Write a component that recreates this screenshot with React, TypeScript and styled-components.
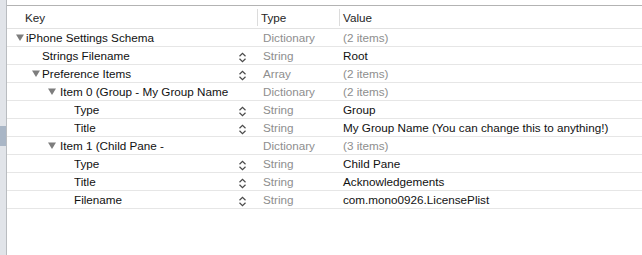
import React from "react";
import styled, { createGlobalStyle } from "styled-components";

interface PlistRow {
  level: number;
  name: string;
  type: string;
  value: string;
  open?: boolean;
  stepper?: boolean;
  muted?: boolean;
}

const rows: PlistRow[] = [
  { level: 0, name: "iPhone Settings Schema", type: "Dictionary", value: "(2 items)", open: true, muted: true },
  { level: 1, name: "Strings Filename", type: "String", value: "Root", stepper: true },
  { level: 1, name: "Preference Items", type: "Array", value: "(2 items)", open: true, stepper: true, muted: true },
  { level: 2, name: "Item 0 (Group - My Group Name", type: "Dictionary", value: "(2 items)", open: true, muted: true },
  { level: 3, name: "Type", type: "String", value: "Group", stepper: true },
  { level: 3, name: "Title", type: "String", value: "My Group Name (You can change this to anything!)", stepper: true },
  { level: 2, name: "Item 1 (Child Pane -", type: "Dictionary", value: "(3 items)", open: true, muted: true },
  { level: 3, name: "Type", type: "String", value: "Child Pane", stepper: true },
  { level: 3, name: "Title", type: "String", value: "Acknowledgements", stepper: true },
  { level: 3, name: "Filename", type: "String", value: "com.mono0926.LicensePlist", stepper: true },
];

const GlobalStyle = createGlobalStyle`
  html, body {
    margin: 0;
    padding: 0;
    background: #fff;
  }
  body {
    font-family: "Liberation Sans", Arial, sans-serif;
    font-size: 11.7px;
    -webkit-font-smoothing: antialiased;
  }
`;

const Window = styled.div`
  display: flex;
  width: 642px;
  height: 255px;
  overflow: hidden;
  background: #fff;
`;

const SideStrip = styled.div`
  width: 6px;
  flex: none;
  background: #e1e4e9;
  border-right: 1px solid #b9bcc0;
  display: flex;
  flex-direction: column;
`;

const StripThumb = styled.div`
  margin-top: 126px;
  height: 20px;
  background: #a9b6c6;
`;

const Editor = styled.div`
  flex: 1;
  display: flex;
  flex-direction: column;
  padding-top: 5px;
`;

const Table = styled.div`
  border-top: 1px solid #b3b3b3;
`;

const Columns = styled.div`
  display: grid;
  grid-template-columns: 250px 82px 1fr;
`;

const HeaderRow = styled(Columns)`
  height: 22px;
  border-bottom: 1px solid #e2e2e2;
  color: #262626;
`;

const HeaderCell = styled.div<{ $inset: number }>`
  display: flex;
  align-items: center;
  padding-left: ${(p) => p.$inset}px;
`;

const HeaderDivider = styled.span`
  width: 1px;
  height: 17px;
  background: #dcdcdc;
  margin-right: 3px;
`;

const Row = styled(Columns)`
  height: 17px;
  border-bottom: 1px solid #e6e6e6;
  align-items: center;
`;

const KeyCell = styled.div<{ $level: number }>`
  display: flex;
  align-items: center;
  height: 100%;
  padding-left: ${(p) => 9 + p.$level * 16}px;
  padding-right: 10px;
  color: #111;
  white-space: nowrap;
`;

const Disclosure = styled.span<{ $wide?: boolean }>`
  width: ${(p) => (p.$wide ? 12 : 10)}px;
  flex: none;
  display: flex;
  align-items: center;
`;

const KeyText = styled.span`
  flex: 1;
  overflow: hidden;
`;

const Stepper = styled.span`
  display: flex;
  align-self: flex-end;
  margin-bottom: 1px;
`;

const TypeCell = styled.div`
  padding-left: 6px;
  color: #8e8e8e;
  white-space: nowrap;
`;

const ValueCell = styled.div<{ $muted?: boolean }>`
  padding-left: 4px;
  color: ${(p) => (p.$muted ? "#8e8e8e" : "#111")};
  white-space: nowrap;
`;

const Triangle = () => (
  <svg width="8" height="7" viewBox="0 0 8 7">
    <polygon points="0,0.5 8,0.5 4,7" fill="#7d7d7d" />
  </svg>
);

const Chevrons = () => (
  <svg width="9" height="11" viewBox="0 0 9 11">
    <polyline points="1.5,4.2 4.5,1.3 7.5,4.2" fill="none" stroke="#4a4a4a" strokeWidth="1.2" />
    <polyline points="1.5,6.8 4.5,9.7 7.5,6.8" fill="none" stroke="#4a4a4a" strokeWidth="1.2" />
  </svg>
);

export default function App() {
  return (
    <Window>
      <GlobalStyle />
      <SideStrip>
        <StripThumb />
      </SideStrip>
      <Editor>
        <Table>
          <HeaderRow>
            <HeaderCell $inset={18}>Key</HeaderCell>
            <HeaderCell $inset={0}>
              <HeaderDivider />
              Type
            </HeaderCell>
            <HeaderCell $inset={0}>
              <HeaderDivider />
              Value
            </HeaderCell>
          </HeaderRow>
          {rows.map((r, i) => (
            <Row key={i}>
              <KeyCell $level={r.level}>
                <Disclosure $wide={r.level === 2}>{r.open && <Triangle />}</Disclosure>
                <KeyText>{r.name}</KeyText>
                {r.stepper && (
                  <Stepper>
                    <Chevrons />
                  </Stepper>
                )}
              </KeyCell>
              <TypeCell>{r.type}</TypeCell>
              <ValueCell $muted={r.muted}>{r.value}</ValueCell>
            </Row>
          ))}
        </Table>
      </Editor>
    </Window>
  );
}
